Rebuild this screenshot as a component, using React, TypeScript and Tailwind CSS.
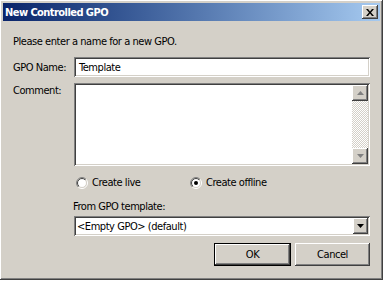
import { useId } from 'react'

const sunken =
  'shadow-[inset_1px_1px_#808080,inset_-1px_-1px_#fff,inset_2px_2px_#404040,inset_-2px_-2px_#d4d0c8]'
const raised =
  'shadow-[inset_-1px_-1px_#404040,inset_1px_1px_#fff,inset_-2px_-2px_#808080,inset_2px_2px_#d4d0c8]'

function Radio({ checked, label }: { checked?: boolean; label: string }) {
  const id = useId().replace(/:/g, '')
  return (
    <label className="flex items-center gap-[4px]">
      <svg width="12" height="12" viewBox="0 0 12 12" className="shrink-0">
        <defs>
          <linearGradient id={`o${id}`} x1="0" y1="0" x2="1" y2="1">
            <stop offset="50%" stopColor="#808080" />
            <stop offset="50%" stopColor="#ffffff" />
          </linearGradient>
          <linearGradient id={`i${id}`} x1="0" y1="0" x2="1" y2="1">
            <stop offset="50%" stopColor="#404040" />
            <stop offset="50%" stopColor="#d4d0c8" />
          </linearGradient>
        </defs>
        <circle cx="6" cy="6" r="5.5" fill="none" stroke={`url(#o${id})`} />
        <circle cx="6" cy="6" r="4.5" fill="#fff" stroke={`url(#i${id})`} />
        {checked && <circle cx="6" cy="6" r="2" fill="#000" />}
      </svg>
      <span>{label}</span>
    </label>
  )
}

function Arrow({ dir, color }: { dir: 'up' | 'down'; color: string }) {
  return (
    <svg width="7" height="4" viewBox="0 0 7 4">
      {dir === 'up' ? (
        <path d="M3.5 0L7 4H0z" fill={color} />
      ) : (
        <path d="M0 0h7L3.5 4z" fill={color} />
      )}
    </svg>
  )
}

export default function App() {
  return (
    <div className="w-[384px] h-[281px] overflow-hidden bg-white">
      <div
        className={`flex h-[280px] w-[383px] flex-col bg-[#d4d0c8] p-[3px] text-[11px] leading-[13px] tracking-[-0.45px] text-black font-['DejaVu_Sans_Condensed','Liberation_Sans',sans-serif] [font-stretch:condensed] ${raised}`}
      >
        {/* Title bar */}
        <div className="flex h-[18px] shrink-0 items-center justify-between bg-linear-to-r from-[#0a246a] to-[#a6caf0] pl-[2px] pr-[2px]">
          <span className="font-bold tracking-[-0.55px] text-white">New Controlled GPO</span>
          <button
            className={`flex h-[14px] w-[16px] items-center justify-center bg-[#d4d0c8] ${raised}`}
          >
            <svg width="8" height="7" viewBox="0 0 8 7">
              <path d="M0 0h2l2 2.5L6 0h2L5 3.5 8 7H6L4 4.5 2 7H0l3-3.5z" fill="#000" />
            </svg>
          </button>
        </div>

        {/* Body */}
        <div className="flex flex-1 flex-col pl-[10px] pr-[10px] pt-[14px]">
          <p>Please enter a name for a new GPO.</p>

          <div className="mt-[9px] grid grid-cols-[61px_1fr] items-center">
            <span>GPO Name:</span>
            <div className={`flex h-[20px] items-center bg-white pl-[5px] ${sunken}`}>Template</div>
          </div>

          <div className="mt-[6px] grid grid-cols-[61px_1fr] items-start">
            <span className="pt-[1px]">Comment:</span>
            <div className={`flex h-[83px] justify-end bg-white p-[2px] ${sunken}`}>
              <div className="flex w-[16px] flex-col justify-between bg-[image:repeating-conic-gradient(#fff_0_25%,#d4d0c8_0_50%)] bg-[length:2px_2px]">
                <div className={`flex h-[16px] items-center justify-center bg-[#d4d0c8] ${raised}`}>
                  <Arrow dir="up" color="#808080" />
                </div>
                <div className={`flex h-[16px] items-center justify-center bg-[#d4d0c8] ${raised}`}>
                  <Arrow dir="down" color="#808080" />
                </div>
              </div>
            </div>
          </div>

          <div className="ml-[63px] mt-[10px] flex">
            <div className="w-[114px]">
              <Radio label="Create live" />
            </div>
            <Radio checked label="Create offline" />
          </div>

          <p className="ml-[60px] mt-[11px]">From GPO template:</p>

          <div
            className={`ml-[61px] mt-[3px] flex h-[20px] items-center justify-between bg-white p-[2px] pl-[3px] ${sunken}`}
          >
            <span>&lt;Empty GPO&gt; (default)</span>
            <div className={`flex h-[16px] w-[15px] items-center justify-center bg-[#d4d0c8] ${raised}`}>
              <Arrow dir="down" color="#000" />
            </div>
          </div>

          <div className="mt-[7px] flex justify-end gap-[4px]">
            <button className="h-[23px] w-[77px] border border-black bg-[#d4d0c8] p-0">
              <div className={`flex h-full w-full items-center justify-center ${raised}`}>OK</div>
            </button>
            <button className={`h-[23px] w-[75px] bg-[#d4d0c8] ${raised}`}>Cancel</button>
          </div>
        </div>
      </div>
    </div>
  )
}
